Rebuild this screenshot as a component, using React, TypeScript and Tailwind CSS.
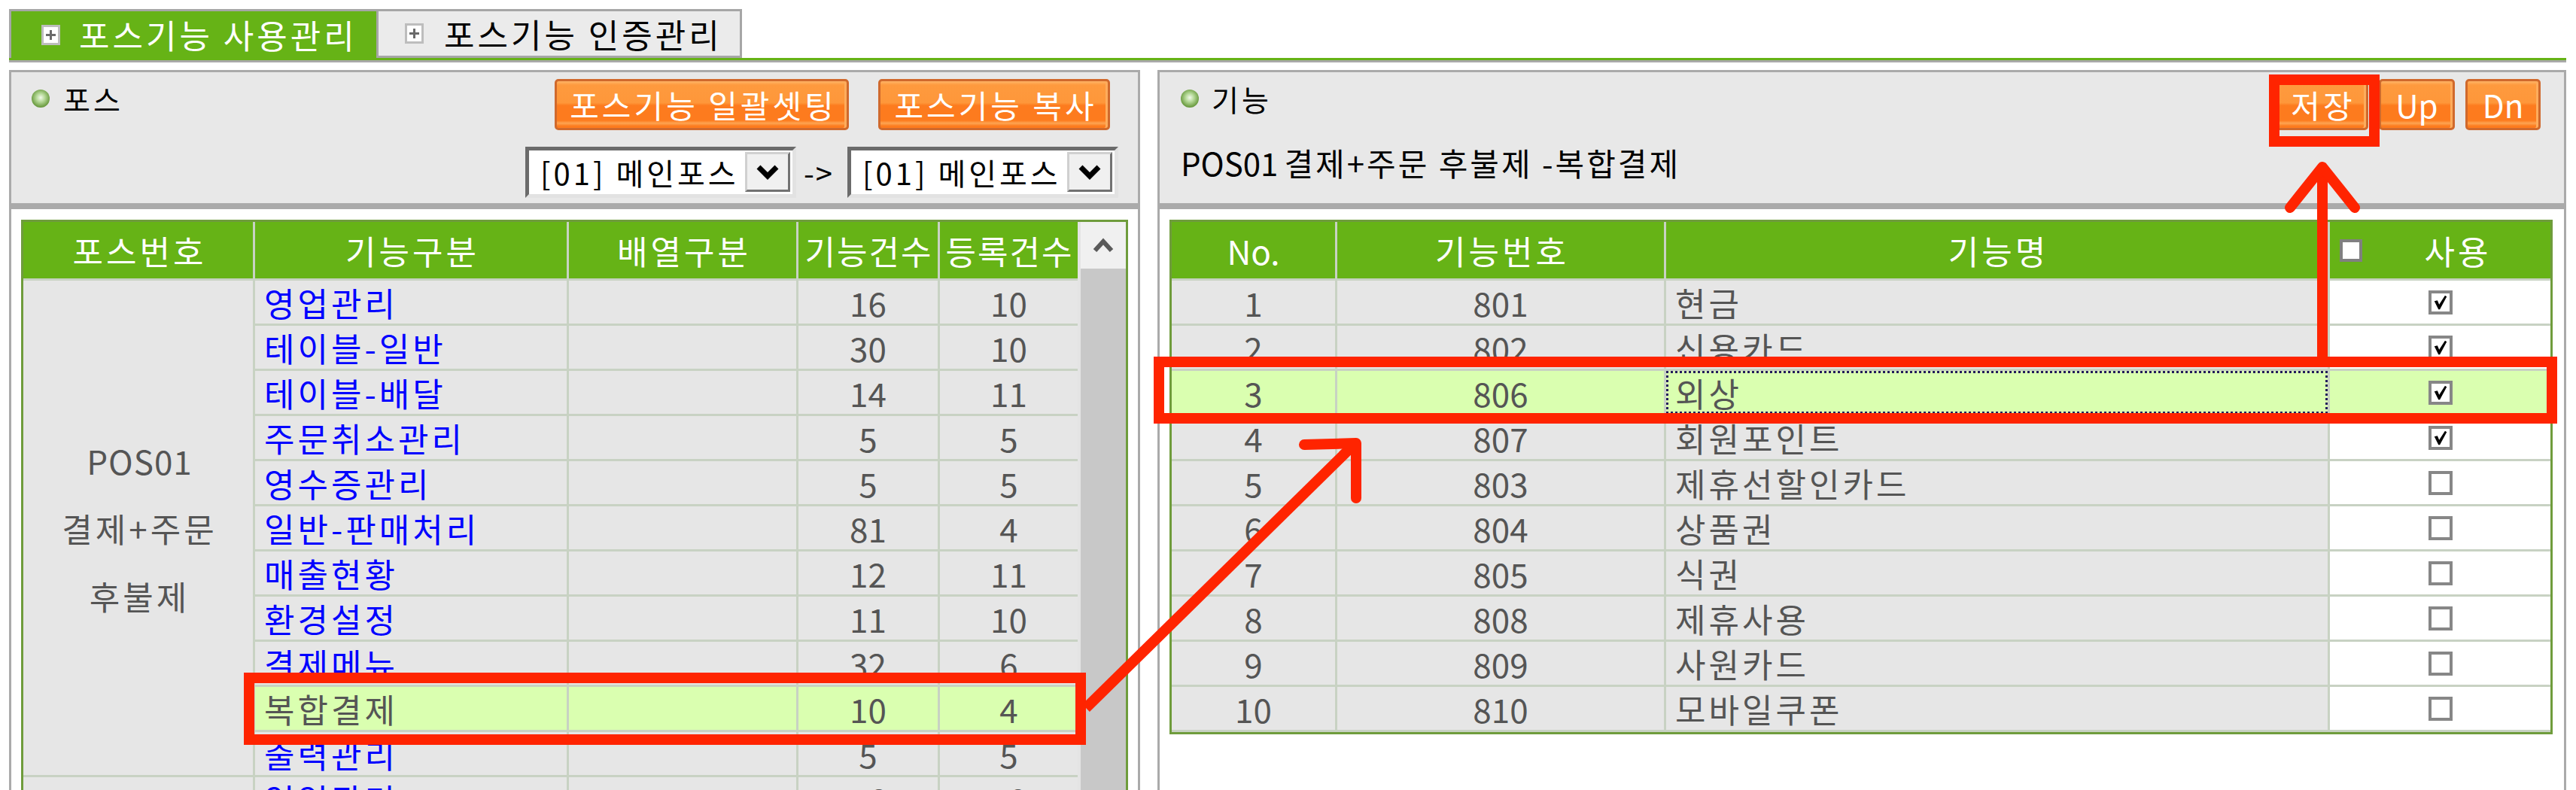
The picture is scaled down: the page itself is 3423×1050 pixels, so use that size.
import React from "react";

type GroupRow = { name: string; cnt: number; reg: number; selected?: boolean };

const posRows: GroupRow[] = [
  { name: "영업관리", cnt: 16, reg: 10 },
  { name: "테이블-일반", cnt: 30, reg: 10 },
  { name: "테이블-배달", cnt: 14, reg: 11 },
  { name: "주문취소관리", cnt: 5, reg: 5 },
  { name: "영수증관리", cnt: 5, reg: 5 },
  { name: "일반-판매처리", cnt: 81, reg: 4 },
  { name: "매출현황", cnt: 12, reg: 11 },
  { name: "환경설정", cnt: 11, reg: 10 },
  { name: "결제메뉴", cnt: 32, reg: 6 },
  { name: "복합결제", cnt: 10, reg: 4, selected: true },
  { name: "출력관리", cnt: 5, reg: 5 },
];

const nextRows: GroupRow[] = [
  { name: "영업관리", cnt: 16, reg: 10 },
  { name: "테이블-일반", cnt: 30, reg: 10 },
];

const funcs = [
  { no: 1, code: 801, name: "현금", use: true },
  { no: 2, code: 802, name: "신용카드", use: true },
  { no: 3, code: 806, name: "외상", use: true, selected: true },
  { no: 4, code: 807, name: "회원포인트", use: true },
  { no: 5, code: 803, name: "제휴선할인카드", use: false },
  { no: 6, code: 804, name: "상품권", use: false },
  { no: 7, code: 805, name: "식권", use: false },
  { no: 8, code: 808, name: "제휴사용", use: false },
  { no: 9, code: 809, name: "사원카드", use: false },
  { no: 10, code: 810, name: "모바일쿠폰", use: false },
];

function TabIcon() {
  return (
    <span className="flex h-[27px] w-[25px] shrink-0 items-center justify-center border-[3px] border-[#bdbdbd] bg-white">
      <svg width="15" height="15" viewBox="0 0 15 15">
        <path d="M7.5 1v13M1 7.5h13" stroke="#6a6a6a" strokeWidth="3" />
      </svg>
    </span>
  );
}

function Bullet() {
  return (
    <span className="inline-block h-[24px] w-[24px] shrink-0 rounded-full bg-[radial-gradient(circle_at_50%_45%,#f2f9ea_0%,#b4d896_32%,#6e9e44_68%,#4a7626_100%)]" />
  );
}

function OrangeButton({ label, w }: { label: string; w: string }) {
  return (
    <button
      type="button"
      className={
        "flex h-[68px] items-center justify-center rounded-[5px] border-[3px] border-[#d0692c] bg-[linear-gradient(to_bottom,#ffb466_0px,#fe9a3e_5px,#fe973a_46%,#fd7b1e_52%,#fd7b1e_84%,#fda452_90%,#fd7b1e_96%)] text-[42px] leading-none text-white shadow-[inset_-3px_0_0_#fdac5c] " +
        w
      }
    >
      {label}
    </button>
  );
}

function PosSelect() {
  return (
    <div className="flex h-[68px] w-[360px] border-[5px] border-t-[#6b6b6b] border-l-[#6b6b6b] border-r-[#e2e2e2] border-b-[#e2e2e2] bg-white">
      <span className="flex flex-1 items-center pl-[15px] text-[40px] text-black">[01] 메인포스</span>
      <span className="mb-[3px] mr-[3px] mt-[2px] flex w-[60px] items-center justify-center border-[3px] border-t-[#d0d0d0] border-l-[#d0d0d0] border-r-[#727272] border-b-[#727272] bg-[#f0f0f0]">
        <svg width="30" height="22" viewBox="0 0 30 22">
          <path d="M3 4L15 16L27 4" stroke="#000" strokeWidth="7" fill="none" />
        </svg>
      </span>
    </div>
  );
}

function Check({ on }: { on?: boolean }) {
  return (
    <span className="flex h-[32px] w-[32px] items-center justify-center border-[4px] border-[#878787] bg-white">
      {on && (
        <svg width="22" height="22" viewBox="0 0 24 24">
          <path d="M3 10L7.5 9L10 15L18.5 2L21 3.5L11 22H9Z" fill="#000" />
        </svg>
      )}
    </span>
  );
}

const headCell = "flex items-center justify-center bg-[#66b316] pl-[4px] text-white";
const numCell = "flex items-center justify-center bg-[#e6e6e6] tracking-[0px]";
const numCellSel = "flex items-center justify-center bg-[#daffb0] tracking-[0px]";

export default function App() {
  return (
    <div className="relative h-[1050px] w-[3423px] overflow-hidden bg-white pl-[12px] pt-[12px] font-['Noto_Sans_CJK_KR','Noto_Sans',sans-serif] text-[44px] leading-none tracking-[4px] text-[#555555]">
      {/* Tabs */}
      <div className="w-[3398px]">
        <div className="flex h-[65px]">
          <div className="flex w-[491px] items-center border-[3px] border-b-0 border-[#a6a6a6] bg-[#66b316] pl-[40px] text-white">
            <TabIcon />
            <span className="ml-[25px]">포스기능 사용관리</span>
          </div>
          <div className="flex w-[483px] items-center border-[3px] border-l-0 border-[#a6a6a6] bg-[#ebebeb] pl-[35px] text-black">
            <TabIcon />
            <span className="ml-[27px]">포스기능 인증관리</span>
          </div>
        </div>
        <div className="h-[3px] bg-[#66b316]" />
        <div className="h-[3px] bg-[#a9a9a9]" />
      </div>

      <div className="mt-[10px] flex w-[3398px] gap-[23px]">
        {/* Left panel: 포스 */}
        <section className="w-[1503px] border-[3px] border-b-0 border-[#aaaaaa]">
          <div className="flex h-[182px] justify-between border-b-[8px] border-[#aaaaaa] bg-[#e8e8e8]">
            <div className="ml-[27px] mt-[20px] flex h-[30px] items-center gap-[18px] text-[39px] text-black">
              <Bullet />
              포스
            </div>
            <div className="flex flex-col items-end pr-[26px] pt-[9px]">
              <div className="mr-[11px] flex gap-[39px]">
                <OrangeButton label="포스기능 일괄셋팅" w="w-[391px] pl-[4px]" />
                <OrangeButton label="포스기능 복사" w="w-[308px] pl-[4px]" />
              </div>
              <div className="mt-[22px] flex items-center">
                <PosSelect />
                <span className="flex w-[68px] justify-center pr-[8px] text-[40px] tracking-[2px] text-black">-&gt;</span>
                <PosSelect />
              </div>
            </div>
          </div>

          <div className="bg-white px-[13px] pt-[14px]">
            <div className="flex border-[3px] border-[#6f9c3c]">
              <div className="grid grid-cols-[305px_414px_302px_185px_183px] grid-rows-[75px] auto-rows-[57px] gap-[3px] bg-[#c8d2c3]">
                <div className={headCell}>포스번호</div>
                <div className={headCell}>기능구분</div>
                <div className={headCell}>배열구분</div>
                <div className="flex items-center justify-center bg-[#66b316] pl-[2px] tracking-[2px] text-white">기능건수</div>
                <div className="flex items-center justify-center bg-[#66b316] pl-[2px] tracking-[2px] text-white">등록건수</div>

                <div className="row-span-11 flex items-center justify-center bg-[#e6e6e6] pl-[4px] text-center leading-[90px]">
                  <span>
                    <span className="tracking-[1px]">POS01</span>
                    <br />
                    결제+주문
                    <br />
                    후불제
                  </span>
                </div>
                {posRows.map((r) => (
                  <React.Fragment key={r.name}>
                    <div
                      className={
                        r.selected
                          ? "flex items-center bg-[#daffb0] pl-[12px] text-[#555555]"
                          : "flex items-center bg-[#e6e6e6] pl-[12px] text-[#0000ff]"
                      }
                    >
                      {r.name}
                    </div>
                    <div className={r.selected ? "bg-[#daffb0]" : "bg-[#e6e6e6]"} />
                    <div className={r.selected ? numCellSel : numCell}>{r.cnt}</div>
                    <div className={r.selected ? numCellSel : numCell}>{r.reg}</div>
                  </React.Fragment>
                ))}

                <div className="row-span-2 bg-[#e6e6e6]" />
                {nextRows.map((r) => (
                  <React.Fragment key={"n" + r.name}>
                    <div className="flex items-center bg-[#e6e6e6] pl-[12px] text-[#0000ff]">{r.name}</div>
                    <div className="bg-[#e6e6e6]" />
                    <div className={numCell}>{r.cnt}</div>
                    <div className={numCell}>{r.reg}</div>
                  </React.Fragment>
                ))}
              </div>

              {/* scrollbar */}
              <div className="w-[64px] border-l-[4px] border-[#e4e4e4] bg-[#c8c8c8]">
                <div className="flex h-[62px] items-center justify-center bg-[#f0f0f0]">
                  <svg width="28" height="22" viewBox="0 0 28 22">
                    <path d="M3 18L14 6L25 18" stroke="#5a5a5a" strokeWidth="6" fill="none" />
                  </svg>
                </div>
              </div>
            </div>
          </div>
        </section>

        {/* Right panel: 기능 */}
        <section className="w-[1872px] border-[3px] border-b-0 border-[#aaaaaa]">
          <div className="h-[182px] border-b-[8px] border-[#aaaaaa] bg-[#e8e8e8] pl-[28px] pr-[31px]">
            <div className="flex justify-between">
              <div className="mt-[20px] flex h-[30px] items-center gap-[17px] text-[39px] text-black">
                <Bullet />
                기능
              </div>
              <div className="mt-[9px] flex gap-[14px]">
                <OrangeButton label="저장" w="w-[124px] pl-[4px]" />
                <OrangeButton label="Up" w="w-[101px] tracking-[0px]" />
                <OrangeButton label="Dn" w="w-[100px] tracking-[0px]" />
              </div>
            </div>
            <div className="mt-[26px] flex h-[34px] items-center text-[42px] tracking-[3px] text-black">
              <span className="mr-[8px] tracking-[0px]">POS01</span>결제+주문 후불제 -복합결제
            </div>
          </div>

          <div className="bg-white pl-[13px] pr-[15px] pt-[14px]">
            <div className="border-[3px] border-[#6f9c3c]">
              <div className="grid grid-cols-[217px_434px_879px_293px] grid-rows-[75px] auto-rows-[57px] gap-[3px] bg-[#c8d2c3] pb-[3px]">
                <div className="flex items-center justify-center bg-[#66b316] tracking-[0px] text-white">No.</div>
                <div className={headCell}>기능번호</div>
                <div className={headCell}>기능명</div>
                <div className="flex items-center bg-[#66b316] text-white">
                  <span className="ml-[13px] h-[30px] w-[30px] border-[4px] border-[#808080] bg-white" />
                  <span className="flex-1 pl-[4px] text-center">사용</span>
                </div>

                {funcs.map((f) => (
                  <React.Fragment key={f.no}>
                    <div className={f.selected ? numCellSel : numCell}>{f.no}</div>
                    <div className={f.selected ? numCellSel : numCell}>{f.code}</div>
                    <div
                      className={
                        f.selected
                          ? "flex items-center bg-[#daffb0] pl-[12px] outline-dotted outline-[3px] outline-offset-[-3px] outline-[#241c5c]"
                          : "flex items-center bg-[#e6e6e6] pl-[12px]"
                      }
                    >
                      {f.name}
                    </div>
                    <div className={f.selected ? "flex items-center justify-center bg-[#daffb0]" : "flex items-center justify-center bg-white"}>
                      <Check on={f.use} />
                    </div>
                  </React.Fragment>
                ))}
              </div>
            </div>
          </div>
        </section>
      </div>

      {/* red annotation marks */}
      <svg
        className="pointer-events-none absolute left-0 top-0"
        width="3423"
        height="1050"
        viewBox="0 0 3423 1050"
        fill="none"
        stroke="#ff2400"
        strokeWidth="14"
      >
        <rect x="3022" y="106" width="133" height="82" />
        <rect x="1540" y="481" width="1851" height="75" />
        <rect x="331" y="901" width="1105" height="82" />
        <path d="M3086 226V474" />
        <path d="M3043 276L3086 222L3129 276" strokeLinecap="round" strokeLinejoin="round" />
        <path d="M1443 941L1798 592" />
        <path d="M1733 591L1802 589V662" strokeLinecap="round" strokeLinejoin="round" />
      </svg>
    </div>
  );
}
